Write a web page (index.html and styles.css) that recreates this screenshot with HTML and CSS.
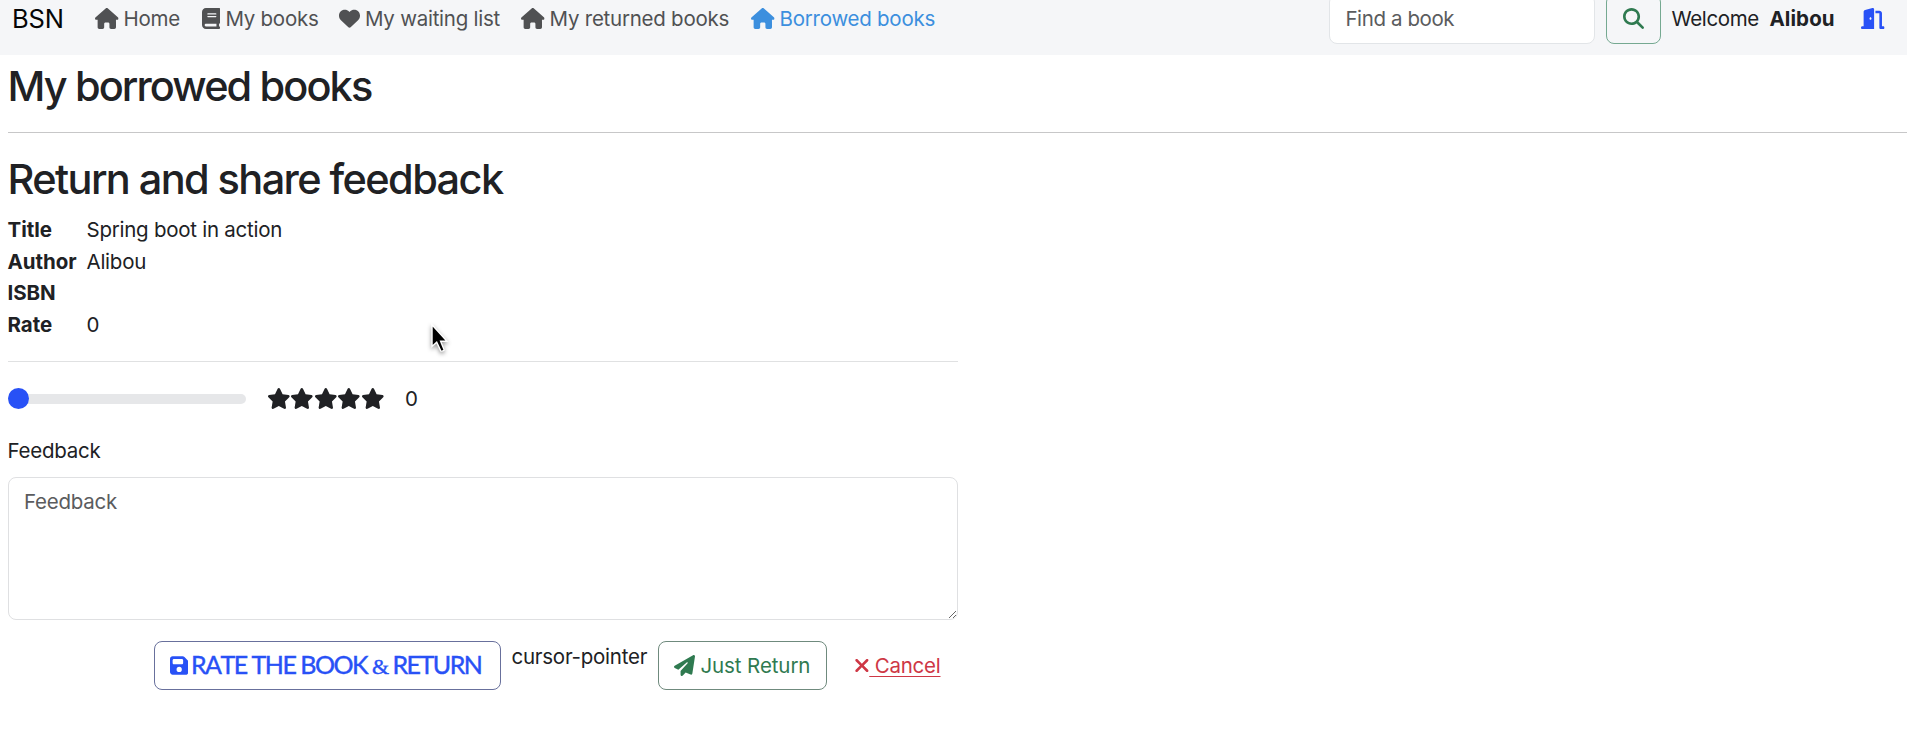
FILE: index.html
```html
<!DOCTYPE html>
<html lang="en">
<head>
<meta charset="utf-8">
<title>My borrowed books</title>
<link rel="stylesheet" href="styles.css">
</head>
<body>
<svg class="sprite" width="0" height="0">
  <symbol id="house" viewBox="0 0 576 512"><path d="M575.8 255.5c0 18-15 32.1-32 32.1h-32l.7 160.2c0 2.7-.2 5.4-.5 8.1V472c0 22.1-17.9 40-40 40H456c-1.1 0-2.2 0-3.3-.1c-1.4 .1-2.8 .1-4.2 .1H416 392c-22.1 0-40-17.9-40-40V448 384c0-17.7-14.3-32-32-32H256c-17.7 0-32 14.3-32 32v64 24c0 22.1-17.9 40-40 40H160 128.1c-1.5 0-3-.1-4.5-.2c-1.2 .1-2.4 .2-3.6 .2H104c-22.1 0-40-17.9-40-40V360c0-.9 0-1.9 .1-2.8V287.6H32c-18 0-32-14-32-32.1c0-9 3-17 10-24L266.4 8c7-7 15-8 22-8s15 2 21 7L564.8 231.5c8 7 12 15 11 24z"/></symbol>
  <symbol id="book" viewBox="0 0 448 512"><path d="M96 0C43 0 0 43 0 96V416c0 53 43 96 96 96H384h32c17.7 0 32-14.3 32-32s-14.3-32-32-32V384c17.7 0 32-14.3 32-32V32c0-17.7-14.3-32-32-32H384 96zm0 384H352v64H96c-17.7 0-32-14.3-32-32s14.3-32 32-32zm32-240c0-8.8 7.2-16 16-16H336c8.8 0 16 7.2 16 16s-7.2 16-16 16H144c-8.8 0-16-7.2-16-16zm16 48H336c8.8 0 16 7.2 16 16s-7.2 16-16 16H144c-8.8 0-16-7.2-16-16s7.2-16 16-16z"/></symbol>
  <symbol id="heart" viewBox="0 0 512 512"><path d="M47.6 300.4L228.3 469.1c7.5 7 17.4 10.9 27.7 10.9s20.2-3.9 27.7-10.9L464.4 300.4c30.4-28.3 47.6-68 47.6-109.5v-5.8c0-69.9-50.5-129.5-119.4-141C347 36.5 300.6 51.4 268 84L256 96 244 84c-32.6-32.6-79-47.5-124.6-39.9C50.5 55.6 0 115.2 0 185.1v5.8c0 41.5 17.2 81.2 47.6 109.5z"/></symbol>
  <symbol id="search" viewBox="0 0 512 512"><path d="M416 208c0 45.9-14.9 88.3-40 122.7L502.6 457.4c12.5 12.5 12.5 32.8 0 45.3s-32.8 12.5-45.3 0L330.7 376c-34.4 25.2-76.8 40-122.7 40C93.1 416 0 322.9 0 208S93.1 0 208 0S416 93.1 416 208zM208 352a144 144 0 1 0 0-288 144 144 0 1 0 0 288z"/></symbol>
  <symbol id="door" viewBox="0 0 576 512"><path d="M320 32c0-9.900-4.500-19.200-12.300-25.200S289.800-1.400 280.200 1l-179.900 45C79 51.300 64 70.500 64 92.500V448H32c-17.700 0-32 14.300-32 32s14.300 32 32 32H96 288h32V480 32zM256 256c0 17.700-10.700 32-24 32s-24-14.300-24-32s10.700-32 24-32s24 14.300 24 32zm96-128h96V480c0 17.700 14.300 32 32 32h64c17.700 0 32-14.300 32-32s-14.300-32-32-32H512V128c0-35.300-28.700-64-64-64H352v64z"/></symbol>
  <symbol id="star" viewBox="0 0 576 512"><path d="M316.9 18C311.6 7 300.4 0 288.1 0s-23.4 7-28.8 18L195 150.3 51.4 171.5c-12 1.8-22 10.2-25.7 21.7s-.7 24.2 7.9 32.7L137.8 329 113.2 474.7c-2 12 3 24.2 12.9 31.3s23 8 33.8 2.3l128.3-68.5 128.3 68.5c10.800 5.700 23.900 4.900 33.800-2.300s14.900-19.300 12.900-31.300L438.500 329 542.700 225.900c8.600-8.500 11.700-21.200 7.900-32.700s-13.700-19.900-25.700-21.700L381.200 150.300 316.900 18z"/></symbol>
  <symbol id="floppy" viewBox="0 0 448 512"><path d="M64 32C28.700 32 0 60.700 0 96V416c0 35.300 28.700 64 64 64H384c35.300 0 64-28.700 64-64V173.300c0-17-6.700-33.300-18.700-45.300L352 50.700C340 38.700 323.700 32 306.700 32H64zm0 96c0-17.700 14.300-32 32-32H288c17.700 0 32 14.300 32 32v64c0 17.700-14.300 32-32 32H96c-17.700 0-32-14.300-32-32V128zM224 288a64 64 0 1 1 0 128 64 64 0 1 1 0-128z"/></symbol>
  <symbol id="plane" viewBox="0 0 512 512"><path d="M498.1 5.6c10.1 7 15.4 19.1 13.5 31.2l-64 416c-1.5 9.7-7.4 18.2-16 23s-18.9 5.4-28 1.6L284 427.7l-68.5 74.1c-8.9 9.7-22.9 12.9-35.2 8.1S160 493.2 160 480V396.4c0-4 1.500-7.800 4.200-10.700L331.800 202.800c5.800-6.300 5.600-16-.4-22s-15.700-6.400-22-.7L106 360.800 17.700 316.600C7.100 311.300 .3 300.700 0 288.900s5.900-22.800 16.100-28.700l448-256c10.700-6.100 23.900-5.500 34 1.400z"/></symbol>
  <symbol id="xmark" viewBox="0 0 384 512"><path d="M342.6 150.6c12.5-12.5 12.5-32.8 0-45.3s-32.8-12.5-45.3 0L192 210.7 86.6 105.4c-12.5-12.5-32.8-12.5-45.3 0s-12.5 32.800 0 45.300L146.700 256 41.400 361.400c-12.500 12.500-12.500 32.800 0 45.300s32.800 12.500 45.300 0L192 301.300 297.400 406.600c12.500 12.500 32.800 12.500 45.300 0s12.500-32.800 0-45.300L237.300 256 342.600 150.600z"/></symbol>
</svg>

<nav class="navbar">
  <a class="brand">BSN</a>
  <a class="link home"><svg class="icon wide"><use href="#house"/></svg><span>Home</span></a>
  <a class="link books"><svg class="icon narrow"><use href="#book"/></svg><span>My books</span></a>
  <a class="link waiting"><svg class="icon"><use href="#heart"/></svg><span>My waiting list</span></a>
  <a class="link returned"><svg class="icon wide"><use href="#house"/></svg><span>My returned books</span></a>
  <a class="link borrowed"><svg class="icon wide"><use href="#house"/></svg><span>Borrowed books</span></a>
  <div class="tools">
    <input class="search" type="text" placeholder="Find a book">
    <button class="search-btn"><svg class="icon"><use href="#search"/></svg></button>
    <span class="welcome">Welcome</span>
    <span class="user">Alibou</span>
    <a class="logout"><svg class="icon wide"><use href="#door"/></svg></a>
  </div>
</nav>

<main class="page">
  <h1 class="heading first">My borrowed books</h1>
  <hr class="rule">
  <section class="panel">
    <h1 class="heading second">Return and share feedback</h1>
    <dl class="details">
      <dt>Title</dt><dd class="book-title">Spring boot in action</dd>
      <dt>Author</dt><dd>Alibou</dd>
      <dt>ISBN</dt><dd></dd>
      <dt>Rate</dt><dd>0</dd>
    </dl>
    <hr class="rule light">
    <div class="rating">
      <div class="range"><span class="thumb"></span></div>
      <div class="stars">
        <svg class="icon wide"><use href="#star"/></svg><svg class="icon wide"><use href="#star"/></svg><svg class="icon wide"><use href="#star"/></svg><svg class="icon wide"><use href="#star"/></svg><svg class="icon wide"><use href="#star"/></svg>
      </div>
      <span>0</span>
    </div>
    <label class="label" for="feedback">Feedback</label>
    <textarea class="textarea" id="feedback" placeholder="Feedback"></textarea>
    <div class="actions">
      <button class="btn rate"><svg class="icon narrow"><use href="#floppy"/></svg><span>RATE THE BOOK <span class="amp">&amp;</span> RETURN</span></button>
      <span class="note">cursor-pointer</span>
      <button class="btn return"><svg class="icon"><use href="#plane"/></svg><span>Just Return</span></button>
      <a class="cancel"><svg class="icon cross"><use href="#xmark"/></svg><span>&nbsp;Cancel</span></a>
    </div>
  </section>
</main>
<svg class="pointer" viewBox="0 0 20 32"><path d="M2 2V25L7 20.500L11.200 29.500Q12.600 30.800 15 28.800L11.200 19.500H18Z"/></svg>
</body>
</html>
```

FILE: styles.css
```css
* { box-sizing: border-box; }
body {
  margin: 0;
  height: 741px;
  overflow: hidden;
  background: #fff;
  color: #202124;
  font-family: Inter, "Liberation Sans", sans-serif;
  font-size: 20.5px;
  line-height: 31.5px;
  letter-spacing: -0.25px;
}
button, input, textarea { font: inherit; letter-spacing: inherit; }
.sprite { display: none; }
.icon { width: 21px; height: 21px; fill: currentColor; flex: none; display: block; }
.icon.wide { width: 23.6px; }
.icon.narrow { width: 18.4px; }
.icon.cross { width: 15.75px; }

.navbar {
  display: flex;
  align-items: center;
  height: 55px;
  padding: 0 22px 18px 12px;
  background: #f5f6f8;
  white-space: nowrap;
}
.brand { width: 83px; color: #060606; font-size: 25.5px; letter-spacing: -0.2px; }
.link { display: flex; align-items: center; gap: 5px; color: #505153; }
.home { width: 107px; }
.books { width: 137px; }
.waiting { width: 182px; }
.returned { width: 230px; }
.borrowed { color: #3c8fde; }
.tools { display: flex; align-items: center; margin-left: auto; }
.search {
  width: 266px;
  height: 50px;
  padding: 0 15px;
  border: 1px solid #e2e5e8;
  border-radius: 8px;
  background: #fff;
  letter-spacing: -0.4px;
}
.search::placeholder, .textarea::placeholder { color: #5b5c5e; opacity: 1; }
.search-btn {
  display: flex;
  align-items: center;
  justify-content: center;
  width: 55px;
  height: 50px;
  margin: 0 10px 0 11px;
  padding: 0;
  border: 1px solid #75a991;
  border-radius: 8px;
  background: transparent;
  color: #2f7a50;
}
.welcome { width: 98px; letter-spacing: -0.35px; }
.user { width: 92px; font-weight: 700; letter-spacing: 0.1px; }
.logout { color: #2851f6; }

.page { padding-left: 7.5px; }
.heading { margin: 0; font-size: 41.5px; font-weight: 500; line-height: 50px; }
.first { padding-top: 6px; height: 77px; letter-spacing: -1.9px; }
.rule { margin: 0; height: 0; border: 0; border-top: 1px solid #c7c7c8; }
.panel { width: 950px; }
.second { padding-top: 21px; height: 81px; letter-spacing: -1.6px; }
.details { display: grid; grid-template-columns: 79px 1fr; grid-auto-rows: 31.5px; margin: 0 0 21px; }
.details dt { font-weight: 700; letter-spacing: -0.05px; }
.details dd { margin: 0; }
.light { border-color: #e0e1e2; }
.rating { display: flex; align-items: center; height: 73px; }
.range { width: 238px; height: 10px; margin-right: 21px; border-radius: 5px; background: #e6e7e9; }
.thumb { display: block; width: 21px; height: 21px; margin-top: -5.5px; border-radius: 50%; background: #2851f6; }
.stars { display: flex; margin-right: 20.5px; }
.label { display: block; height: 42px; }
.textarea {
  display: block;
  width: 950px;
  height: 143px;
  padding: 8px 15.5px;
  border: 1px solid #dfe0e2;
  border-radius: 8px;
  resize: vertical;
}
.actions { display: flex; margin: 21px 0 0 146px; white-space: nowrap; }
.btn {
  display: flex;
  align-items: center;
  height: 49px;
  padding: 0 0 0 15px;
  border: 1px solid #6c737e;
  border-radius: 8px;
  background: #fff;
}
.rate {
  width: 347px;
  gap: 3px;
  border-color: #68709c;
  color: #2851f6;
  font-family: Lato, sans-serif;
  font-size: 25px;
  font-kerning: none;
  letter-spacing: -1.5px;
  -webkit-text-stroke: 0.4px currentColor;
}
.amp { font-family: "Liberation Serif", serif; font-size: 22px; }
.note { width: 157px; padding-left: 11px; }
.return { width: 169px; gap: 6px; border-color: #6f8a7d; color: #2f7a50; }
.return span { letter-spacing: -0.1px; }
.cancel { display: flex; align-items: center; height: 49px; margin-left: 27px; color: #ce3745; }
.cancel span { text-decoration: underline; text-decoration-thickness: 1px; text-underline-offset: 3px; }
.pointer {
  position: absolute;
  left: 430px;
  top: 323px;
  width: 19px;
  height: 30px;
  overflow: visible;
  fill: #000;
  stroke: #fff;
  stroke-width: 1.5px;
  filter: drop-shadow(0 2px 2px rgba(0, 0, 0, 0.4));
}
```
